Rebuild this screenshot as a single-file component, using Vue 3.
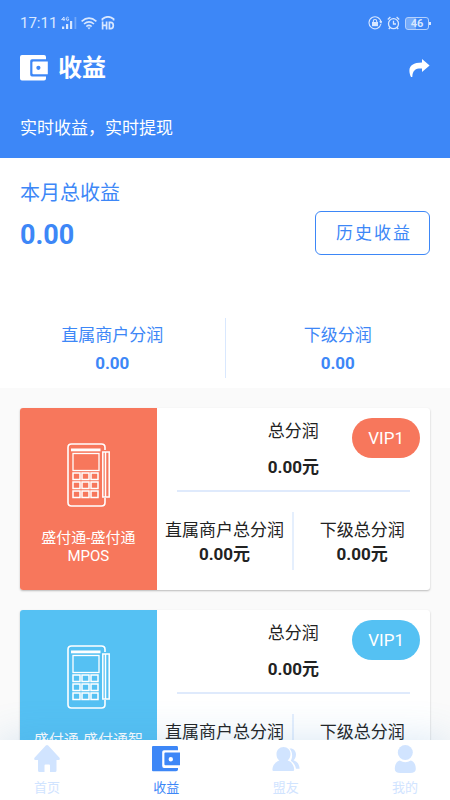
<script setup>
const stats = [
  { label: '直属商户分润', value: '0.00' },
  { label: '下级分润', value: '0.00' },
]

const products = [
  { name: '盛付通-盛付通 MPOS', level: 'VIP1', theme: 'coral', total: '0.00元', direct: '0.00元', sub: '0.00元' },
  { name: '盛付通-盛付通智', level: 'VIP1', theme: 'sky', total: '0.00元', direct: '0.00元', sub: '0.00元' },
]

const keyColumns = [6, 15, 24]
const keyRows = [30, 39, 48]

const tabs = [
  { id: 'home', label: '首页' },
  { id: 'income', label: '收益' },
  { id: 'friends', label: '盟友' },
  { id: 'mine', label: '我的' },
]
const activeTab = 'income'
</script>

<template>
  <div class="screen">
    <main class="content">
      <header class="hero">
        <div class="status">
          <div class="status-group">
            <span class="clock">17:11</span>
            <svg class="signal" width="16" height="14" viewBox="0 0 16 14" aria-hidden="true">
              <g fill="none" stroke="currentColor" stroke-width="0.9">
                <path d="M3 5V1L0.6 3.6H4" />
                <path d="M7.6 1.6C6.8 0.7 5.2 1 5.2 2.9S6.8 5 7.6 4.2V3H6.5" />
              </g>
              <g fill="currentColor">
                <rect x="1" y="10.500" width="2.200" height="2.500" />
                <rect x="5" y="8" width="2.200" height="5" />
                <rect x="9" y="5" width="2.200" height="8" />
                <rect x="13.500" y="1" width="1.800" height="12" opacity="0.35" />
              </g>
            </svg>
            <svg width="16" height="13" viewBox="0 0 16 13" fill="none" stroke="currentColor" stroke-width="1.6" aria-hidden="true">
              <path d="M0.6 4.4Q8-2 15.4 4.4" />
              <path d="M3 7Q8 2.6 13 7" />
              <path d="M5.3 9.5Q8 7.2 10.7 9.5" />
              <path d="M6.4 10.6H9.6L8 12.6Z" fill="currentColor" stroke="none" />
            </svg>
            <svg class="hd" width="14" height="14" viewBox="0 0 14 14" fill="none" stroke="currentColor" stroke-width="1.7" aria-hidden="true">
              <path d="M1.4 4.4V3Q7-1.4 12.6 3V4.400" />
              <path d="M1.600 5.500V13.500M5.600 5.500V13.500M1.600 9.400H5.600" />
              <path d="M8.400 6.300H9.600Q12.300 6.300 12.300 9.500T9.600 12.700H8.400Z" />
            </svg>
          </div>
          <div class="status-group right">
            <svg width="14" height="14" viewBox="0 0 14 14" fill="none" stroke="currentColor" stroke-width="1.1" aria-hidden="true">
              <path d="M12.9 8A6 6 0 1 1 13 6.3M11.6 5.4L13 6.8L13.8 5.2M9.5 12.4L12 10.5" />
              <path d="M5.3 6.2V5Q5.3 3.5 7 3.5T8.7 5V6.2" />
              <rect x="4" y="6" width="6" height="4.2" fill="currentColor" stroke="none" />
            </svg>
            <svg width="13" height="14" viewBox="0 0 13 14" fill="none" stroke="currentColor" stroke-width="1.3" aria-hidden="true">
              <circle cx="6.5" cy="7.7" r="5" />
              <path d="M6.5 4.8V8H9M0.8 3.4L3.4 1M12.2 3.4L9.6 1M3 11.5L1.8 13M10 11.5L11.2 13" />
            </svg>
            <span class="battery">46</span>
          </div>
        </div>

        <div class="title-row">
          <svg class="wallet" width="28" height="26" viewBox="0 0 28 26" aria-hidden="true">
            <path d="M2 0H24Q26 0 26 2V4.2H12Q10.2 4.2 10.2 6V19.6Q10.2 21.6 12 21.6H26V23.6Q26 25.6 24 25.6H2Q0 25.6 0 23.6V2Q0 0 2 0Z" />
            <path fill-rule="evenodd" d="M13.4 6.6H27.8V19.2H13.4Q12.4 19.2 12.4 18.2V7.6Q12.4 6.6 13.4 6.6ZM18.4 10.7A2.1 2.1 0 1 0 18.4 14.9A2.1 2.1 0 1 0 18.4 10.7Z" />
          </svg>
          <h1>收益</h1>
          <button class="share" type="button" aria-label="分享">
            <svg width="21" height="18" viewBox="0 0 21 18" aria-hidden="true">
              <path fill="currentColor" d="M13 0L20.6 6.4L13 13V9.6C7.500 9.300 3.600 10.400 3.300 18H2C-2 9 1.500 3.500 13 3.500Z" />
            </svg>
          </button>
        </div>
        <p class="slogan">实时收益，实时提现</p>
      </header>

      <section class="summary">
        <h2>本月总收益</h2>
        <div class="total-row">
          <strong>0.00</strong>
          <button class="history" type="button">历史收益</button>
        </div>
        <div class="stats">
          <div v-for="stat in stats" :key="stat.label" class="stat">
            <span>{{ stat.label }}</span>
            <b>{{ stat.value }}</b>
          </div>
        </div>
      </section>

      <section class="cards">
        <article v-for="product in products" :key="product.name" class="card" :class="product.theme">
          <div class="product">
            <svg width="43" height="64" viewBox="0 0 43 64" fill="none" stroke="currentColor" aria-hidden="true">
              <path stroke-width="1.6" d="M38 7V4.500Q38 1 34.500 1H4.500Q1 1 1 4.500V59.500Q1 63 4.500 63H34.500Q38 63 38 59.500V55" />
              <rect x="4" y="5.500" width="29.500" height="2.800" fill="currentColor" stroke="none" />
              <rect x="6" y="10.500" width="26" height="17" stroke-width="1.300" />
              <template v-for="y in keyRows" :key="y">
                <rect v-for="x in keyColumns" :key="x" :x="x" :y="y" width="7" height="6.500" stroke-width="1.500" />
              </template>
              <rect x="35.800" y="9" width="6.400" height="45" stroke-width="1.500" />
              <path stroke-width="1.500" d="M38.500 9V54" />
            </svg>
            <p>{{ product.name }}</p>
          </div>
          <div class="detail">
            <span class="badge">{{ product.level }}</span>
            <div class="overall">
              <span>总分润</span>
              <b>{{ product.total }}</b>
            </div>
            <div class="breakdown">
              <div class="part">
                <span>直属商户总分润</span>
                <b>{{ product.direct }}</b>
              </div>
              <div class="part">
                <span>下级总分润</span>
                <b>{{ product.sub }}</b>
              </div>
            </div>
          </div>
        </article>
      </section>
    </main>

    <nav class="tabs">
      <a v-for="tab in tabs" :key="tab.id" href="#" class="tab" :class="{ active: tab.id === activeTab }">
        <svg v-if="tab.id === 'home'" width="28" height="28" viewBox="0 0 28 28" fill="currentColor" aria-hidden="true">
          <path d="M12.800 0.600Q14 -0.400 15.200 0.600L26.500 12.800Q27.500 15 25.500 15H23.500V25.500Q23.500 27 22 27H17V20.500Q17 19.500 16 19.500H12.500Q11.500 19.500 11.500 20.500V27H6.500Q5 27 5 25.500V15H2.500Q0.500 15 1.500 12.800Z" />
        </svg>
        <svg v-else-if="tab.id === 'income'" width="28" height="28" viewBox="0 -1 28 28" fill="currentColor" aria-hidden="true">
          <path d="M1 0H25Q26 0 26 2V4.200H12Q10.200 4.200 10.200 6V19.800Q10.200 22 12 22H26V23.600Q26 25.200 24 25.200H1Q0 25.200 0 24.200V1Q0 0 1 0Z" />
          <path fill-rule="evenodd" d="M13.400 6.600H28V19.200H13.400Q12.400 19.200 12.400 18.200V7.600Q12.400 6.600 13.400 6.600ZM18.800 11A2.200 2.200 0 1 0 18.800 15.400A2.200 2.200 0 1 0 18.800 11Z" />
        </svg>
        <svg v-else-if="tab.id === 'friends'" width="28" height="28" viewBox="0 0 28 28" fill="currentColor" aria-hidden="true">
          <path d="M11.500 2C15.500 2 18.500 5 18.500 9C18.500 12 17.400 14 15.600 15.600C19.500 16.800 22 20 22.200 24.500Q22.200 26 21 26H1.500Q0.400 26 0.400 24.500C0.600 20 3.500 17 7.400 15.600C5.200 14 4.500 12 4.500 9C4.500 5 7.500 2 11.500 2Z" />
          <path d="M17.500 3.500C21.300 2.900 24 5.800 24 9.500C24 12 23 14 21.500 15.200C25.300 16.500 27.500 19.500 27.600 23.800H24C23.300 20.300 21.800 17.800 18.800 15.700C20.800 12 20.700 7 17.500 3.500Z" />
        </svg>
        <svg v-else width="28" height="28" viewBox="0 0 28 28" fill="currentColor" aria-hidden="true">
          <ellipse cx="14.300" cy="7.500" rx="7.500" ry="7.500" />
          <path d="M8.800 15.600Q14.300 18.800 19.800 15.600C23 16.600 24.800 19.500 24.800 24Q24.800 28 19 28H9.500Q3.800 28 3.800 24C3.800 19.500 5.500 16.600 8.800 15.600Z" />
        </svg>
        <span>{{ tab.label }}</span>
      </a>
    </nav>
  </div>
</template>

<style>
body {
  margin: 0;
}
</style>

<style scoped>
.screen {
  --blue: #3d87f7;
  display: flex;
  flex-direction: column;
  height: 100vh;
  overflow: hidden;
  background: #fafafa;
  color: #222;
  font: 17px/24px Roboto, "Noto Sans CJK SC", sans-serif;
}

h1,
h2,
p {
  margin: 0;
  font-weight: 400;
}

b {
  font-weight: 700;
}

button {
  font: inherit;
  cursor: pointer;
}

.content {
  flex: 1;
  min-height: 0;
  overflow-y: auto;
  scrollbar-width: none;
}

.hero {
  padding: 12px 20px 18px;
  background: var(--blue);
  color: #fff;
}

.status {
  display: flex;
  justify-content: space-between;
  height: 22px;
  color: #d8e7ff;
}

.status-group {
  display: flex;
  align-items: center;
  gap: 4px;
}

.status-group.right {
  gap: 5px;
  padding-right: 1px;
}

.clock {
  font-size: 15px;
}

.battery {
  position: relative;
  box-sizing: border-box;
  width: 24px;
  height: 13px;
  border: 1px solid #b5d1fc;
  border-radius: 3px;
  background: linear-gradient(to right, #75abfa 46%, transparent 46%);
  font-size: 11px;
  font-weight: 700;
  line-height: 11px;
  text-align: center;
}

.battery::after {
  content: "";
  position: absolute;
  top: 4px;
  right: -3px;
  width: 2px;
  height: 3px;
  background: currentColor;
}

.title-row {
  display: flex;
  align-items: center;
  height: 36px;
  margin-top: 16px;
}

.wallet {
  fill: currentColor;
}

h1 {
  margin-left: 10px;
  font-size: 24px;
  font-weight: 700;
  line-height: 36px;
}

.share {
  display: flex;
  margin-left: auto;
  padding: 0;
  border: 0;
  background: none;
  color: inherit;
}

.slogan {
  margin-top: 30px;
}

.summary {
  padding: 23px 0 10px;
  background: #fff;
  color: var(--blue);
}

h2 {
  padding: 0 20px;
  font-size: 20px;
  line-height: 24px;
}

.total-row {
  display: flex;
  align-items: center;
  justify-content: space-between;
  margin-top: 6px;
  padding: 0 20px;
}

.total-row strong {
  padding-top: 4px;
  font-size: 27px;
  font-weight: 700;
  line-height: 40px;
}

.history {
  padding: 9px 17px 9px 20px;
  border: 1px solid var(--blue);
  border-radius: 6px;
  background: none;
  color: inherit;
  letter-spacing: 2px;
}

.stats {
  display: flex;
  margin-top: 63px;
}

.stat {
  flex: 1;
  display: flex;
  flex-direction: column;
  align-items: center;
  gap: 4px;
  padding: 5px 0 3px;
}

.stat + .stat {
  border-left: 1px solid #d9e8fe;
}

.cards {
  display: flex;
  flex-direction: column;
  gap: 20px;
  padding: 20px;
}

.card {
  display: grid;
  grid-template-columns: minmax(0, 1fr) minmax(0, 2fr);
  overflow: hidden;
  border-radius: 3px;
  background: #fff;
  box-shadow: 0 1px 2px rgba(0, 0, 0, 0.26);
}

.coral {
  --theme: #f7775c;
}

.sky {
  --theme: #55c1f3;
}

.product {
  display: flex;
  flex-direction: column;
  align-items: center;
  gap: 22px;
  padding: 35px 12px 20px;
  background: var(--theme);
  color: #fff;
}

.product p {
  font-size: 15px;
  line-height: 18px;
  text-align: center;
}

.detail {
  position: relative;
  padding: 11px 0 20px;
}

.badge {
  position: absolute;
  top: 10px;
  right: 10px;
  padding: 8px 16px;
  border-radius: 20px;
  background: var(--theme);
  color: #fff;
}

.overall {
  display: flex;
  flex-direction: column;
  align-items: center;
  gap: 12px;
  margin: 0 20px;
  padding-bottom: 11px;
  border-bottom: 2px solid #dfeafc;
}

.breakdown {
  display: flex;
  margin-top: 20px;
}

.part {
  flex: 1;
  display: flex;
  flex-direction: column;
  align-items: center;
  padding: 6px 0 4px;
  white-space: nowrap;
}

.part + .part {
  border-left: 2px solid #e5effd;
}

.tabs {
  position: relative;
  display: flex;
  justify-content: space-between;
  padding: 5px 31px 0 33px;
  height: 55px;
  background: #fff;
  box-shadow: 0 0 40px rgba(61, 135, 200, 0.2);
}

.tab {
  display: flex;
  flex-direction: column;
  align-items: center;
  width: 28px;
  color: #d1e4ff;
  font-size: 13px;
  line-height: 20px;
  text-decoration: none;
  white-space: nowrap;
}

.tab span {
  margin-top: 5px;
}

.tab.active {
  color: var(--blue);
}
</style>
